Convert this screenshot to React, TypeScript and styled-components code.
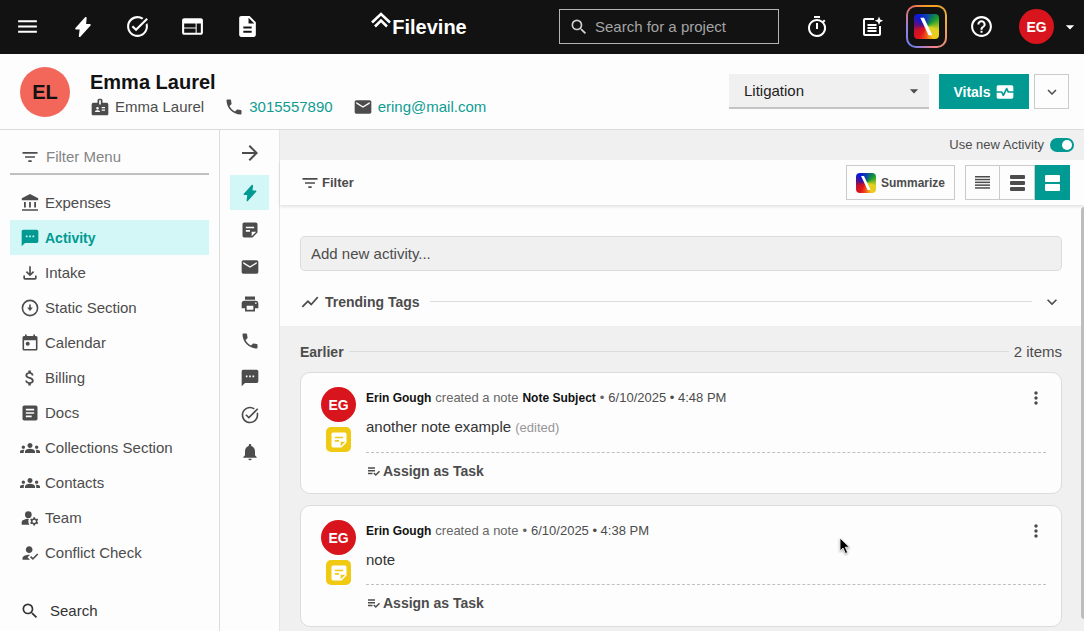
import React from "react";
import styled, { createGlobalStyle, css } from "styled-components";
import {
  MdMenu, MdTaskAlt, MdWeb, MdDescription, MdSearch, MdOutlineTimer, MdHelpOutline,
  MdArrowDropDown, MdBadge, MdPhone, MdMail, MdMonitorHeart, MdExpandMore, MdFilterList,
  MdTextsms, MdOutlineFileDownload, MdAttachMoney, MdArticle,
  MdArrowForward, MdStickyNote2, MdPrint,
  MdNotifications, MdShowChart, MdMoreVert,
} from "react-icons/md";

const teal = "#009a93";
const tealTint = "#d3f7f7";
const ink = "#4c4c4c";
const line = "#dcdcdc";
const paper = "#fdfdfd";
const grey = "#f0f0f0";

const GlobalStyle = createGlobalStyle`
  *, *::before, *::after { box-sizing: border-box; }
  body { margin: 0; background: ${paper}; }
  body, button, input, select {
    font-family: "Liberation Sans", Arial, Helvetica, sans-serif;
    font-size: 15px;
    line-height: 20px;
    color: ${ink};
  }
  button { border: 0; padding: 0; background: none; cursor: pointer; }
  svg { display: block; flex: none; }
`;

const Page = styled.div`
  display: flex;
  flex-direction: column;
  height: 100vh;
  overflow: hidden;
`;

/* Top bar */
const TopBar = styled.header`
  display: flex;
  align-items: center;
  flex: none;
  height: 54px;
  padding-bottom: 1px;
  background: #121212;
  color: #fff;
`;
const TopButton = styled.button`
  display: flex;
  align-items: center;
  justify-content: center;
  width: 55px;
  height: 53px;
  color: #fff;
`;
const CaretButton = styled(TopButton)`
  width: 20px;
  padding-right: 8px;
`;
const Brand = styled.a`
  display: flex;
  flex: 1;
  justify-content: center;
  align-items: center;
  padding-left: 4px;
  color: #fff;
  font-size: 20px;
  font-weight: 700;
  line-height: 30px;
  text-decoration: none;
  gap: 1px;
  svg { align-self: flex-start; }
`;
const ProjectSearch = styled.label`
  display: flex;
  align-items: center;
  gap: 6px;
  width: 220px;
  height: 35px;
  padding: 0 9px;
  margin-right: 10px;
  border: 1px solid #b4b4b4;
  color: #d0d0d0;
  input {
    min-width: 0;
    flex: 1;
    padding: 0;
    border: 0;
    background: none;
    color: #fff;
  }
  input::placeholder { color: #a4a4a4; opacity: 1; }
`;
const Avatar = styled.span<{ $size: number; $tone?: string }>`
  display: flex;
  flex: none;
  align-items: center;
  justify-content: center;
  width: ${(p) => p.$size}px;
  height: ${(p) => p.$size}px;
  border-radius: 50%;
  background: ${(p) => p.$tone ?? "#d8151d"};
  color: #fff;
  font-size: 14px;
  font-weight: 700;
`;
const ProjectAvatar = styled(Avatar)`
  color: #121212;
  font-size: 20px;
`;
const AiFrame = styled.span`
  display: flex;
  align-items: center;
  justify-content: center;
  width: 41px;
  height: 43px;
  border: 2px solid transparent;
  border-radius: 10px;
  background:
    linear-gradient(#121212, #121212) padding-box,
    conic-gradient(#f0a020, #e8b040 20%, #f08090 45%, #7080f0 60%, #9a80e0 75%, #f07060 90%, #f0a020) border-box;
`;
const AiTile = styled.span<{ $size: number }>`
  display: flex;
  flex: none;
  width: ${(p) => p.$size}px;
  height: ${(p) => p.$size}px;
  border-radius: 4px;
  background: conic-gradient(from 0deg, #0a3fb0, #149a30 50deg, #dcd220 105deg, #f0c81c 150deg, #f05a18 180deg, #e0141c 215deg, #c8102c 250deg, #5a1080 280deg, #0a18d8 320deg, #0a3fb0);
`;

/* Project header */
const ProjectHeader = styled.section`
  display: flex;
  flex: none;
  align-items: center;
  height: 76px;
  padding: 0 15px 0 20px;
  border-bottom: 1px solid ${line};
`;
const ProjectInfo = styled.div`
  display: flex;
  flex: 1;
  flex-direction: column;
  gap: 2px;
  min-width: 0;
  padding-top: 3px;
  margin-left: 20px;
`;
const ProjectName = styled.h1`
  margin: 0;
  color: #121212;
  font-size: 20px;
  line-height: 26px;
`;
const ContactRow = styled.div`
  display: flex;
  gap: 20px;
`;
const Contact = styled.span`
  display: flex;
  align-items: center;
  gap: 5px;
  a { color: #0f9c92; text-decoration: none; }
`;
const HeaderActions = styled.div`
  display: flex;
  height: 35px;
`;
const PhaseField = styled.label`
  display: grid;
  align-items: center;
  width: 200px;
  margin-right: 10px;
  background: ${grey};
  border-bottom: 2px solid #c4c4c4;
  select, svg { grid-area: 1 / 1; }
  select {
    appearance: none;
    height: 33px;
    width: 100%;
    padding: 0 15px;
    border: 0;
    background: none;
    color: #222;
  }
  svg { justify-self: end; margin-right: 5px; pointer-events: none; }
`;
const VitalsButton = styled.button`
  display: flex;
  align-items: center;
  justify-content: center;
  gap: 4px;
  width: 90px;
  margin-right: 5px;
  background: ${teal};
  color: #fff;
  font-size: 14px;
  font-weight: 700;
`;
const BoxButton = styled.button`
  display: flex;
  align-items: center;
  justify-content: center;
  gap: 5px;
  min-width: 35px;
  height: 35px;
  border: 1px solid #cbcbcb;
  font-size: 12px;
  font-weight: 700;
`;

/* Workspace */
const Workspace = styled.div`
  display: flex;
  flex: 1;
  min-height: 0;
`;
const Sidebar = styled.nav`
  display: flex;
  flex: none;
  flex-direction: column;
  width: 220px;
  padding: 10px 10px 0;
  border-right: 1px solid ${line};
`;
const MenuFilter = styled.label`
  display: flex;
  flex: none;
  align-items: center;
  gap: 6px;
  height: 35px;
  margin-bottom: 10px;
  padding: 0 10px;
  border-bottom: 2px solid #c0c0c0;
  input { min-width: 0; flex: 1; padding: 0; border: 0; background: none; }
  input::placeholder { color: #858585; opacity: 1; }
`;
const MenuList = styled.ul`
  margin: 0;
  padding: 0;
  list-style: none;
`;
const MenuItem = styled.a<{ $active?: boolean }>`
  display: flex;
  align-items: center;
  height: 35px;
  gap: 5px;
  padding-left: 10px;
  color: ${ink};
  text-decoration: none;
  ${(p) => p.$active && css`
    background: ${tealTint};
    color: ${teal};
    font-size: 14px;
    font-weight: 700;
  `}
`;
const MenuGlyph = styled.span`
  display: flex;
  justify-content: center;
  width: 20px;
`;
const SidebarSearch = styled.button`
  display: flex;
  flex: none;
  align-items: center;
  gap: 10px;
  height: 35px;
  margin-top: 23px;
  padding-left: 10px;
  color: #333;
`;
const Rail = styled.nav`
  display: flex;
  flex: none;
  flex-direction: column;
  align-items: center;
  gap: 2px;
  width: 60px;
  padding-top: 5px;
  border-right: 1px solid #e6e6e6;
`;
const RailButton = styled.button<{ $active?: boolean; $first?: boolean }>`
  display: flex;
  align-items: center;
  justify-content: center;
  width: 39px;
  height: 35px;
  margin-bottom: ${(p) => (p.$first ? 3 : 0)}px;
  background: ${(p) => (p.$active ? tealTint : "none")};
  color: ${(p) => (p.$active ? teal : ink)};
`;

/* Activity panel */
const Main = styled.main`
  display: flex;
  flex: 1;
  flex-direction: column;
  min-width: 0;
`;
const ToggleRow = styled.label`
  display: flex;
  flex: none;
  align-items: center;
  justify-content: flex-end;
  gap: 6px;
  height: 30px;
  padding-right: 10px;
  background: ${grey};
  font-size: 13px;
`;
const Switch = styled.input`
  display: flex;
  align-items: center;
  justify-content: flex-end;
  appearance: none;
  width: 24px;
  height: 14px;
  margin: 0;
  padding: 0 2px;
  border-radius: 7px;
  background: ${teal};
  &::before {
    content: "";
    width: 10px;
    height: 10px;
    border-radius: 50%;
    background: #fff;
  }
  &:not(:checked) { background: #999; justify-content: flex-start; }
`;
const Toolbar = styled.div`
  display: flex;
  flex: none;
  align-items: center;
  z-index: 1;
  height: 45px;
  padding: 0 14px 0 20px;
  background: ${paper};
  box-shadow: 0 2px 3px rgba(0, 0, 0, 0.1);
`;
const FilterButton = styled.button`
  display: flex;
  align-items: center;
  gap: 2px;
  margin-right: auto;
  font-size: 13px;
  font-weight: 700;
`;
const SummarizeButton = styled(BoxButton)`
  padding: 0 9px;
  margin-right: 10px;
`;
const ViewGroup = styled.div`
  display: flex;
`;
const ViewButton = styled(BoxButton)<{ $active?: boolean }>`
  & + & { border-left-width: 0; }
  ${(p) => p.$active && css`
    background: ${teal};
    border-color: ${teal};
    color: #fff;
  `}
`;
const Scroller = styled.div`
  position: relative;
  flex: 1;
  min-height: 0;
  overflow: hidden;
  background: ${grey};
`;
const ScrollThumb = styled.span`
  position: absolute;
  top: 2px;
  right: -4px;
  bottom: 12px;
  width: 7px;
  border-radius: 4px;
  background: #bdbdbd;
`;
const Composer = styled.div`
  display: flex;
  flex-direction: column;
  gap: 10px;
  padding: 31px 22px 4px 20px;
  background: ${paper};
`;
const ActivityInput = styled.input`
  display: block;
  width: 100%;
  height: 35px;
  padding: 0 10px;
  border: 1px solid ${line};
  border-radius: 5px;
  background: ${grey};
  &::placeholder { color: ${ink}; opacity: 1; }
`;
const SectionRow = styled.div`
  display: flex;
  align-items: center;
  height: 41px;
`;
const SectionTitle = styled.h2`
  display: flex;
  align-items: center;
  gap: 5px;
  margin: 0;
  font-size: 14px;
  line-height: 20px;
`;
const Rule = styled.span<{ $space: number }>`
  flex: 1;
  height: 1px;
  margin: 0 ${(p) => p.$space}px;
  background: ${line};
`;
const Feed = styled.section`
  padding: 5px 22px 0 20px;
`;
const Card = styled.article`
  display: flex;
  gap: 10px;
  min-height: 122px;
  margin-bottom: 11px;
  padding: 14px 15px 10px 20px;
  border: 1px solid ${line};
  border-radius: 10px;
  background: ${paper};
`;
const CardSide = styled.div`
  display: flex;
  flex-direction: column;
  align-items: center;
  gap: 5px;
`;
const NoteBadge = styled.span`
  display: flex;
  align-items: center;
  justify-content: center;
  width: 25px;
  height: 25px;
  border-radius: 5px;
  background: #efc912;
  color: #fff;
`;
const CardBody = styled.div`
  flex: 1;
  min-width: 0;
`;
const CardMeta = styled.div`
  display: flex;
  align-items: center;
  gap: 4px;
  height: 22px;
  font-size: 13px;
  color: #666;
  strong { color: #121212; font-size: 12px; }
  time { color: ${ink}; }
  button { margin-left: auto; color: ${ink}; }
`;
const NoteText = styled.p`
  margin: 8px 0 14px;
  color: #333;
  small { font-size: 13px; color: #969696; }
`;
const CardFooter = styled.div`
  padding-top: 8px;
  border-top: 1px dashed #c0c0c0;
`;
const AssignButton = styled.button`
  display: flex;
  align-items: center;
  gap: 2px;
  font-size: 14px;
  font-weight: 700;
`;
const Pointer = styled.svg`
  position: fixed;
  left: 839px;
  top: 537px;
  pointer-events: none;
  filter: drop-shadow(0 1px 1px rgba(0, 0, 0, 0.35));
`;

const AiMark = ({ size }: { size: number }) => (
  <AiTile $size={size}>
    <svg width={size} height={size} viewBox="0 0 24 24">
      <path d="M6 3.500h3.600l8 17H14z" fill="#fff" />
    </svg>
  </AiTile>
);
const Glyph = ({ d, size = 20 }: { d: string; size?: number }) => (
  <svg width={size} height={size} viewBox="0 0 24 24" fill="currentColor" fillRule="evenodd">
    <path d={d} />
  </svg>
);
const BoltIcon = ({ size }: { size: number }) => (
  <svg width={size} height={size} viewBox="0 0 24 24" fill="currentColor" stroke="currentColor" strokeWidth="2" strokeLinejoin="round">
    <path d="M15 2 4.500 13.800h5L8.400 22 19.500 9.800h-5.200z" />
  </svg>
);
const NoteSparkleIcon = () => (
  <svg width="24" height="24" viewBox="0 0 24 24" fill="none" stroke="currentColor" strokeWidth="2">
    <path d="M14 4H5a1 1 0 0 0-1 1v14a1 1 0 0 0 1 1h14a1 1 0 0 0 1-1v-8M7.500 10h9M7.500 13h9M7.500 16h9" />
    <path d="M19 1.500l1.200 3 3 1.200-3 1.200-1.200 3-1.200-3-3-1.200 3-1.200z" fill="currentColor" stroke="none" />
  </svg>
);
const CircleDownIcon = () => (
  <svg width="20" height="20" viewBox="0 0 20 20" fill="none" stroke="currentColor" strokeWidth="1.600">
    <circle cx="10" cy="10" r="7.600" />
    <path d="M10 6.500v4" />
    <path d="M7.200 9.600h5.600L10 13z" fill="currentColor" stroke="none" />
  </svg>
);
const BankIcon = () => (
  <svg width="20" height="20" viewBox="0 0 20 20" fill="currentColor">
    <path d="M10 1 1.800 5.300V7.300h16.400V5.300zM4 9h1.800v5.500H4zM9.100 9h1.800v5.500H9.100zM14.200 9H16v5.500h-1.800zM2 16.200h16v1.600H2z" />
  </svg>
);
const CalendarIcon = () => (
  <svg width="20" height="20" viewBox="0 0 20 20" fill="currentColor" fillRule="evenodd">
    <path d="M5 1.500h1.700V3h6.600V1.500H15V3h1a1.500 1.500 0 0 1 1.500 1.500v11.500a1.500 1.500 0 0 1-1.500 1.500H4a1.500 1.500 0 0 1-1.500-1.500V4.500A1.500 1.500 0 0 1 4 3h1zM4.100 7.200v8.700h11.800V7.200z" />
    <circle cx="7.700" cy="10.800" r="2" />
  </svg>
);
const TaskListIcon = () => (
  <svg width="15" height="15" viewBox="0 0 15 15" fill="none" stroke="currentColor" strokeWidth="1.500">
    <path d="M2 4h7M2 6.700h7M2 9.400h4.500M7.800 9l2 2 3.700-3.700" />
  </svg>
);
const RowsIcon = ({ rows, height, gap, round }: { rows: number; height: number; gap: number; round: number }) => (
  <svg width="15" height={rows * height + (rows - 1) * gap} fill="currentColor">
    {Array.from({ length: rows }, (_, i) => (
      <rect key={i} y={i * (height + gap)} width="15" height={height} rx={round} />
    ))}
  </svg>
);

const groupPath =
  "M12 12.750c1.630 0 3.070.390 4.240.900 1.080.480 1.760 1.560 1.760 2.730V18H6v-1.610c0-1.180.680-2.260 1.760-2.730 1.170-.520 2.610-.910 4.240-.910zM4 13c1.100 0 2-.900 2-2s-.900-2-2-2-2 .900-2 2 .900 2 2 2zm1.130 1.100c-.370-.060-.740-.100-1.130-.100-.990 0-1.930.210-2.780.580C.480 14.900 0 15.620 0 16.430V18h4.500v-1.610c0-.830.230-1.610.630-2.290zM20 13c1.100 0 2-.900 2-2s-.900-2-2-2-2 .900-2 2 .900 2 2 2zm4 3.430c0-.810-.480-1.530-1.220-1.850-.850-.370-1.790-.580-2.780-.580-.390 0-.760.040-1.130.100.400.680.630 1.460.630 2.290V18H24zM12 6c1.660 0 3 1.340 3 3s-1.340 3-3 3-3-1.340-3-3 1.340-3 3-3z";
const teamPath =
  "M10 4a4 4 0 1 0 0 8 4 4 0 0 0 0-8zM10.670 13.020C10.450 13.010 10.230 13 10 13c-2.420 0-4.680.670-6.610 1.820C2.510 15.340 2 16.320 2 17.350V20h9.260A6.960 6.960 0 0 1 10 16c0-1.070.250-2.070.670-2.980zM20.750 16c0-.220-.030-.420-.060-.630l1.140-1.010-1-1.730-1.450.490c-.320-.270-.680-.480-1.080-.630L18 11h-2l-.300 1.490c-.400.150-.760.360-1.080.630l-1.450-.490-1 1.730 1.140 1.010c-.030.210-.060.410-.060.630s.030.420.060.630l-1.140 1.010 1 1.730 1.450-.490c.320.270.680.480 1.080.630L16 21h2l.300-1.490c.400-.150.760-.360 1.080-.630l1.450.490 1-1.730-1.140-1.010c.030-.210.060-.410.060-.630zM17 18c-1.100 0-2-.900-2-2s.900-2 2-2 2 .900 2 2-.900 2-2 2z";
const conflictPath =
  "M9 17l3-2.940c-.390-.040-.680-.060-1-.060-2.670 0-8 1.340-8 4v2h9zM11 12c2.210 0 4-1.790 4-4s-1.790-4-4-4-4 1.790-4 4 1.790 4 4 4zM15.470 20.500L12 17l1.400-1.410 2.070 2.080 5.130-5.170 1.400 1.410z";

const menu = [
  { label: "Expenses", icon: <BankIcon /> },
  { label: "Activity", icon: <MdTextsms size={20} />, active: true },
  { label: "Intake", icon: <MdOutlineFileDownload size={20} /> },
  { label: "Static Section", icon: <CircleDownIcon /> },
  { label: "Calendar", icon: <CalendarIcon /> },
  { label: "Billing", icon: <MdAttachMoney size={20} /> },
  { label: "Docs", icon: <MdArticle size={20} /> },
  { label: "Collections Section", icon: <Glyph d={groupPath} /> },
  { label: "Contacts", icon: <Glyph d={groupPath} /> },
  { label: "Team", icon: <Glyph d={teamPath} /> },
  { label: "Conflict Check", icon: <Glyph d={conflictPath} /> },
];

const rail = [
  { label: "Expand", icon: <MdArrowForward size={24} />, first: true },
  { label: "All activity", icon: <BoltIcon size={18} />, active: true },
  { label: "Notes", icon: <MdStickyNote2 size={20} /> },
  { label: "Emails", icon: <MdMail size={20} /> },
  { label: "Faxes", icon: <MdPrint size={20} /> },
  { label: "Calls", icon: <MdPhone size={20} /> },
  { label: "Texts", icon: <MdTextsms size={20} /> },
  { label: "Tasks", icon: <MdTaskAlt size={20} /> },
  { label: "Alerts", icon: <MdNotifications size={20} /> },
];

const notes = [
  { subject: "Note Subject", date: "6/10/2025 • 4:48 PM", text: "another note example", edited: true },
  { subject: "", date: "6/10/2025 • 4:38 PM", text: "note", edited: false },
];

export default function App() {
  return (
    <Page>
      <GlobalStyle />
      <TopBar>
        <TopButton aria-label="Menu"><MdMenu size={25} /></TopButton>
        <TopButton aria-label="Activity"><BoltIcon size={22} /></TopButton>
        <TopButton aria-label="Tasks"><MdTaskAlt size={25} /></TopButton>
        <TopButton aria-label="Projects"><MdWeb size={25} /></TopButton>
        <TopButton aria-label="Documents"><MdDescription size={25} /></TopButton>
        <Brand href="#">
          <svg width="20" height="16" viewBox="0 0 20 16" fill="none" stroke="#fff" strokeWidth="2.600">
            <path d="M1 10.500L10 2l9 8.500M4 14.500l6-6 6 6" />
          </svg>
          Filevine
        </Brand>
        <ProjectSearch>
          <MdSearch size={20} />
          <input aria-label="Search for a project" placeholder="Search for a project" />
        </ProjectSearch>
        <TopButton aria-label="Timer"><MdOutlineTimer size={24} /></TopButton>
        <TopButton aria-label="New note"><NoteSparkleIcon /></TopButton>
        <TopButton aria-label="Assistant"><AiFrame><AiMark size={25} /></AiFrame></TopButton>
        <TopButton aria-label="Help"><MdHelpOutline size={25} /></TopButton>
        <TopButton aria-label="Account"><Avatar $size={35}>EG</Avatar></TopButton>
        <CaretButton aria-label="Account menu"><MdArrowDropDown size={20} /></CaretButton>
      </TopBar>

      <ProjectHeader>
        <ProjectAvatar $size={50} $tone="#f3675b">EL</ProjectAvatar>
        <ProjectInfo>
          <ProjectName>Emma Laurel</ProjectName>
          <ContactRow>
            <Contact><MdBadge size={20} />Emma Laurel</Contact>
            <Contact><MdPhone size={20} /><a href="#phone">3015557890</a></Contact>
            <Contact><MdMail size={20} /><a href="#mail">ering@mail.com</a></Contact>
          </ContactRow>
        </ProjectInfo>
        <HeaderActions>
          <PhaseField>
            <select aria-label="Phase" defaultValue="Litigation"><option>Litigation</option></select>
            <MdArrowDropDown size={20} />
          </PhaseField>
          <VitalsButton>Vitals <MdMonitorHeart size={20} /></VitalsButton>
          <BoxButton aria-label="More actions"><MdExpandMore size={18} /></BoxButton>
        </HeaderActions>
      </ProjectHeader>

      <Workspace>
        <Sidebar>
          <MenuFilter>
            <MdFilterList size={20} />
            <input aria-label="Filter Menu" placeholder="Filter Menu" />
          </MenuFilter>
          <MenuList>
            {menu.map((item) => (
              <li key={item.label}>
                <MenuItem href="#" $active={item.active}>
                  <MenuGlyph>{item.icon}</MenuGlyph>
                  {item.label}
                </MenuItem>
              </li>
            ))}
          </MenuList>
          <SidebarSearch><MdSearch size={20} />Search</SidebarSearch>
        </Sidebar>

        <Rail>
          {rail.map((item) => (
            <RailButton key={item.label} aria-label={item.label} $active={item.active} $first={item.first}>
              {item.icon}
            </RailButton>
          ))}
        </Rail>

        <Main>
          <ToggleRow>
            Use new Activity
            <Switch type="checkbox" defaultChecked />
          </ToggleRow>
          <Toolbar>
            <FilterButton><MdFilterList size={20} />Filter</FilterButton>
            <SummarizeButton><AiMark size={20} />Summarize</SummarizeButton>
            <ViewGroup>
              <ViewButton aria-label="Compact view"><RowsIcon rows={5} height={1.5} gap={1.3} round={0} /></ViewButton>
              <ViewButton aria-label="Medium view"><RowsIcon rows={3} height={4} gap={2} round={1} /></ViewButton>
              <ViewButton aria-label="Full view" $active><RowsIcon rows={2} height={7} gap={2} round={1} /></ViewButton>
            </ViewGroup>
          </Toolbar>
          <Scroller>
            <Composer>
              <ActivityInput aria-label="Add new activity" placeholder="Add new activity..." />
              <SectionRow>
                <SectionTitle><MdShowChart size={20} />Trending Tags</SectionTitle>
                <Rule $space={10} />
                <button aria-label="Show trending tags"><MdExpandMore size={20} /></button>
              </SectionRow>
            </Composer>
            <Feed>
              <SectionRow>
                <SectionTitle>Earlier</SectionTitle>
                <Rule $space={5} />
                <span>2 items</span>
              </SectionRow>
              {notes.map((note) => (
                <Card key={note.date}>
                  <CardSide>
                    <Avatar $size={35}>EG</Avatar>
                    <NoteBadge><MdStickyNote2 size={20} /></NoteBadge>
                  </CardSide>
                  <CardBody>
                    <CardMeta>
                      <strong>Erin Gough</strong>
                      <span>created a note</span>
                      {note.subject && <strong>{note.subject}</strong>}
                      <span>•</span>
                      <time>{note.date}</time>
                      <button aria-label="Note options"><MdMoreVert size={20} /></button>
                    </CardMeta>
                    <NoteText>
                      {note.text} {note.edited && <small>(edited)</small>}
                    </NoteText>
                    <CardFooter>
                      <AssignButton><TaskListIcon />Assign as Task</AssignButton>
                    </CardFooter>
                  </CardBody>
                </Card>
              ))}
            </Feed>
            <ScrollThumb />
          </Scroller>
        </Main>
      </Workspace>

      <Pointer width="12" height="18" viewBox="0 0 12 18">
        <path d="M1 1v13l3-3 2.400 5.500 2.200-1L6.300 10.200H10.500z" fill="#000" stroke="#fff" strokeWidth="0.800" />
      </Pointer>
    </Page>
  );
}
